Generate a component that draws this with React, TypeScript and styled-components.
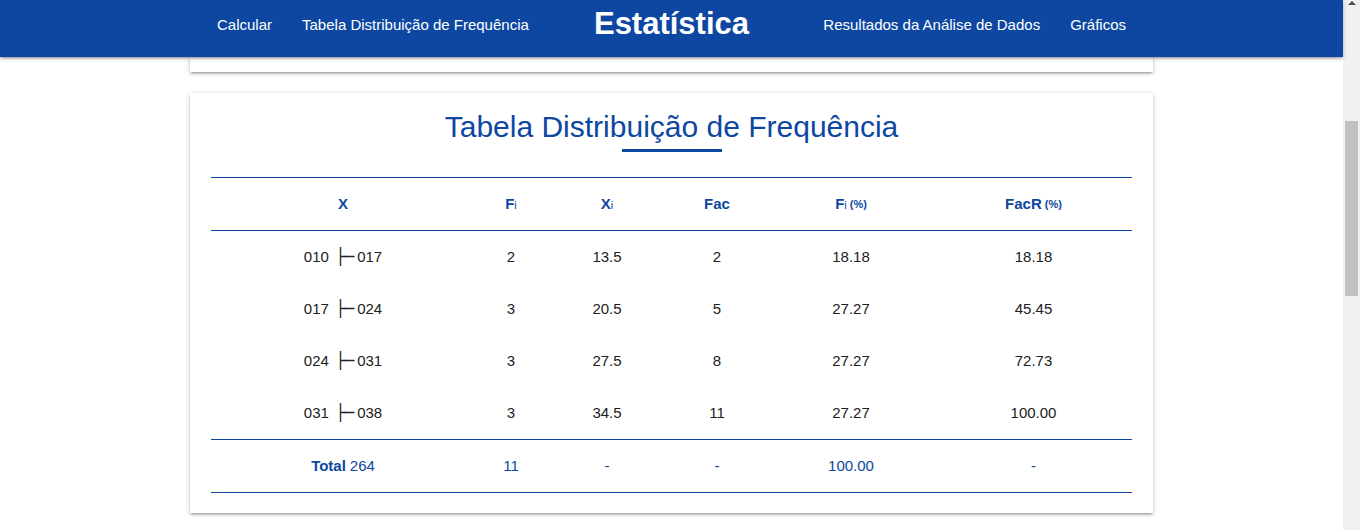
import React from "react";
import styled, { createGlobalStyle } from "styled-components";

const Global = createGlobalStyle`
  html, body { margin: 0; padding: 0; background: #fff; overflow: hidden; }
  body { font-family: "Liberation Sans", Arial, sans-serif; }
  * { box-sizing: border-box; }
`;

const BLUE = "#0d47a1";

const Frame = styled.div`
  display: flex;
  width: 1360px;
  height: 530px;
  overflow: hidden;
`;

const Main = styled.div`
  flex: 1;
  display: flex;
  flex-direction: column;
  background: #fff;
`;

const Nav = styled.nav`
  position: relative;
  z-index: 2;
  height: 57px;
  flex: none;
  background: ${BLUE};
  box-shadow: 0 2px 2px 0 rgba(0,0,0,0.14), 0 3px 1px -2px rgba(0,0,0,0.12), 0 1px 5px 0 rgba(0,0,0,0.2);
  display: flex;
  justify-content: center;
`;

const NavInner = styled.div`
  width: 939px;
  display: grid;
  grid-template-columns: 1fr auto 1fr;
  align-items: center;
  height: 48px;
`;

const LinkGroup = styled.div<{ $end?: boolean }>`
  display: flex;
  justify-content: ${(p) => (p.$end ? "flex-end" : "flex-start")};
`;

const NavLink = styled.a`
  color: #fff;
  font-size: 15px;
  padding: 0 15px;
  text-decoration: none;
  white-space: nowrap;
`;

const Brand = styled.div`
  color: #fff;
  font-size: 31px;
  font-weight: bold;
  padding: 0 30px;
`;

const Container = styled.div`
  width: 963px;
  margin: 0 auto;
  display: flex;
  flex-direction: column;
  gap: 21px;
`;

const Card = styled.div<{ $stub?: boolean }>`
  background: #fff;
  box-shadow: 0 2px 2px 0 rgba(0,0,0,0.14), 0 3px 1px -2px rgba(0,0,0,0.12), 0 1px 5px 0 rgba(0,0,0,0.2);
  height: ${(p) => (p.$stub ? "15px" : "auto")};
  padding: ${(p) => (p.$stub ? "0" : "17px 21px 20px")};
`;

const Title = styled.h2`
  margin: 0;
  font-size: 30px;
  line-height: 34px;
  font-weight: normal;
  color: ${BLUE};
  text-align: center;
`;

const Underline = styled.div`
  width: 100px;
  height: 3px;
  background: ${BLUE};
  margin: 5px auto 25px;
`;

const Table = styled.div`
  display: grid;
  grid-template-columns: 264px 72px 120px 100px 168px 1fr;
  border-top: 1px solid ${BLUE};
`;

const Row = styled.div<{ $border?: boolean; $blue?: boolean; $head?: boolean }>`
  display: contents;
  & > div {
    height: ${(p) => (p.$border ? "53px" : "52px")};
    border-bottom: ${(p) => (p.$border ? `1px solid ${BLUE}` : "none")};
    color: ${(p) => (p.$blue || p.$head ? BLUE : "#212121")};
    font-weight: ${(p) => (p.$head ? "bold" : "normal")};
  }
`;

const Cell = styled.div`
  display: flex;
  align-items: center;
  justify-content: center;
  font-size: 15px;
  padding-bottom: 2px;
  white-space: pre;
`;

const Sub = styled.span`
  font-size: 11px;
  font-weight: normal;
  position: relative;
  top: 2px;
`;

const Small = styled.span`
  font-size: 11px;
  margin-left: 3px;
  position: relative;
  top: 1px;
`;

const Sep = styled.span`
  font-family: "DejaVu Sans", sans-serif;
  font-size: 16px;
  margin: 0 4px 0 7px;
  letter-spacing: -1px;
`;

const Bold = styled.b`
  margin-right: 4px;
`;

const Scrollbar = styled.div`
  width: 17px;
  flex: none;
  background: #f1f1f1;
  display: flex;
  flex-direction: column;
  align-items: center;
`;

const Arrow = styled.div`
  width: 0;
  height: 0;
  margin-top: 1px;
  border-left: 4px solid transparent;
  border-right: 4px solid transparent;
  border-bottom: 4px solid #505050;
`;

const Thumb = styled.div`
  width: 13px;
  height: 175px;
  margin-top: 116px;
  background: #c1c1c1;
`;

const rows = [
  ["010", "017", "2", "13.5", "2", "18.18", "18.18"],
  ["017", "024", "3", "20.5", "5", "27.27", "45.45"],
  ["024", "031", "3", "27.5", "8", "27.27", "72.73"],
  ["031", "038", "3", "34.5", "11", "27.27", "100.00"],
];

export default function App() {
  return (
    <>
      <Global />
      <Frame>
        <Main>
          <Nav>
            <NavInner>
              <LinkGroup>
                <NavLink>Calcular</NavLink>
                <NavLink>Tabela Distribuição de Frequência</NavLink>
              </LinkGroup>
              <Brand>Estatística</Brand>
              <LinkGroup $end>
                <NavLink>Resultados da Análise de Dados</NavLink>
                <NavLink>Gráficos</NavLink>
              </LinkGroup>
            </NavInner>
          </Nav>
          <Container>
            <Card $stub />
            <Card>
              <Title>Tabela Distribuição de Frequência</Title>
              <Underline />
              <Table>
                <Row $head $border>
                  <Cell>X</Cell>
                  <Cell>F<Sub>i</Sub></Cell>
                  <Cell>X<Sub>i</Sub></Cell>
                  <Cell>Fac</Cell>
                  <Cell>F<Sub>i</Sub><Small>(%)</Small></Cell>
                  <Cell>FacR<Small>(%)</Small></Cell>
                </Row>
                {rows.map((r, i) => (
                  <Row key={i} $border={i === rows.length - 1}>
                    <Cell>
                      {r[0]}
                      <Sep>├─</Sep>
                      {r[1]}
                    </Cell>
                    <Cell>{r[2]}</Cell>
                    <Cell>{r[3]}</Cell>
                    <Cell>{r[4]}</Cell>
                    <Cell>{r[5]}</Cell>
                    <Cell>{r[6]}</Cell>
                  </Row>
                ))}
                <Row $blue $border>
                  <Cell><Bold>Total</Bold>264</Cell>
                  <Cell>11</Cell>
                  <Cell>-</Cell>
                  <Cell>-</Cell>
                  <Cell>100.00</Cell>
                  <Cell>-</Cell>
                </Row>
              </Table>
            </Card>
          </Container>
        </Main>
        <Scrollbar>
          <Arrow />
          <Thumb />
        </Scrollbar>
      </Frame>
    </>
  );
}
